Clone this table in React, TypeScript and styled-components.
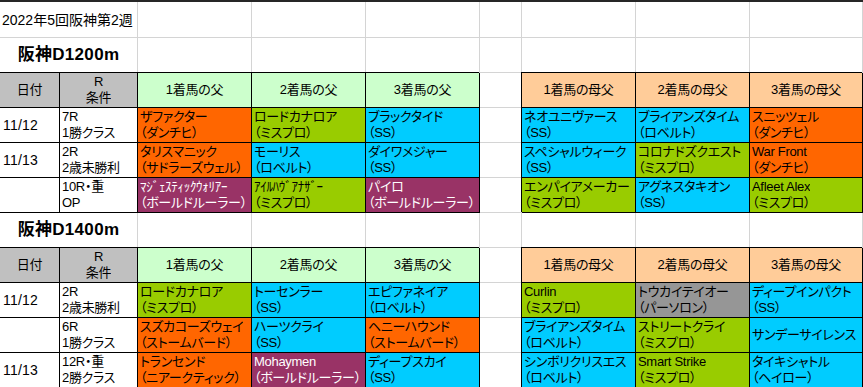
import styled, { createGlobalStyle, css } from "styled-components";

type Tone = "orange" | "green" | "cyan" | "purple" | "gray";

const TONE_COLORS: Record<Tone, string> = {
  orange: "#ff6600",
  green: "#99cc00",
  cyan: "#00ccff",
  purple: "#993366",
  gray: "#969696",
};

const GRID_LINE = "#d4d4d4";
const FONT = `"Liberation Sans", "Noto Sans CJK JP", sans-serif`;

type Horse = { name: string; line?: string; tone: Tone };
type Race = { date: string; race: string; cond: string; sires: Horse[]; dams: Horse[] };
type Block = { title: string; races: Race[] };

const BLOCKS: Block[] = [
  {
    title: "阪神D1200m",
    races: [
      {
        date: "11/12",
        race: "7R",
        cond: "1勝クラス",
        sires: [
          { name: "ザファクター", line: "（ダンチヒ）", tone: "orange" },
          { name: "ロードカナロア", line: "（ミスプロ）", tone: "green" },
          { name: "ブラックタイド", line: "（SS）", tone: "cyan" },
        ],
        dams: [
          { name: "ネオユニヴァース", line: "（SS）", tone: "cyan" },
          { name: "ブライアンズタイム", line: "（ロベルト）", tone: "cyan" },
          { name: "スニッツェル", line: "（ダンチヒ）", tone: "orange" },
        ],
      },
      {
        date: "11/13",
        race: "2R",
        cond: "2歳未勝利",
        sires: [
          { name: "タリスマニック", line: "（サドラーズウェル）", tone: "orange" },
          { name: "モーリス", line: "（ロベルト）", tone: "cyan" },
          { name: "ダイワメジャー", line: "（SS）", tone: "cyan" },
        ],
        dams: [
          { name: "スペシャルウィーク", line: "（SS）", tone: "cyan" },
          { name: "コロナドズクエスト", line: "（ミスプロ）", tone: "green" },
          { name: "War Front", line: "（ダンチヒ）", tone: "orange" },
        ],
      },
      {
        date: "",
        race: "10R・重",
        cond: "OP",
        sires: [
          { name: "ﾏｼﾞｪｽﾃｨｯｸｳｫﾘｱｰ", line: "（ボールドルーラー）", tone: "purple" },
          { name: "ｱｲﾙﾊｳﾞｱﾅｻﾞｰ", line: "（ミスプロ）", tone: "green" },
          { name: "パイロ", line: "（ボールドルーラー）", tone: "purple" },
        ],
        dams: [
          { name: "エンパイアメーカー", line: "（ミスプロ）", tone: "green" },
          { name: "アグネスタキオン", line: "（SS）", tone: "cyan" },
          { name: "Afleet Alex", line: "（ミスプロ）", tone: "green" },
        ],
      },
    ],
  },
  {
    title: "阪神D1400m",
    races: [
      {
        date: "11/12",
        race: "2R",
        cond: "2歳未勝利",
        sires: [
          { name: "ロードカナロア", line: "（ミスプロ）", tone: "green" },
          { name: "トーセンラー", line: "（SS）", tone: "cyan" },
          { name: "エピファネイア", line: "（ロベルト）", tone: "cyan" },
        ],
        dams: [
          { name: "Curlin", line: "（ミスプロ）", tone: "green" },
          { name: "トウカイテイオー", line: "（パーソロン）", tone: "gray" },
          { name: "ディープインパクト", line: "（SS）", tone: "cyan" },
        ],
      },
      {
        date: "",
        race: "6R",
        cond: "1勝クラス",
        sires: [
          { name: "スズカコーズウェイ", line: "（ストームバード）", tone: "orange" },
          { name: "ハーツクライ", line: "（SS）", tone: "cyan" },
          { name: "ヘニーハウンド", line: "（ストームバード）", tone: "orange" },
        ],
        dams: [
          { name: "ブライアンズタイム", line: "（ロベルト）", tone: "cyan" },
          { name: "ストリートクライ", line: "（ミスプロ）", tone: "green" },
          { name: "サンデーサイレンス", tone: "cyan" },
        ],
      },
      {
        date: "11/13",
        race: "12R・重",
        cond: "2勝クラス",
        sires: [
          { name: "トランセンド", line: "（ニアークティック）", tone: "orange" },
          { name: "Mohaymen", line: "（ボールドルーラー）", tone: "purple" },
          { name: "ディープスカイ", line: "（SS）", tone: "cyan" },
        ],
        dams: [
          { name: "シンボリクリスエス", line: "（ロベルト）", tone: "cyan" },
          { name: "Smart Strike", line: "（ミスプロ）", tone: "green" },
          { name: "タイキシャトル", line: "（ヘイロー）", tone: "cyan" },
        ],
      },
    ],
  },
];

export default function App() {
  return (
    <>
      <GlobalStyle />
      <TopBar />
      <Sheet>
        <Cell $span={2} $align="left">
          <SheetTitle>2022年5回阪神第2週</SheetTitle>
        </Cell>
        <BlankCells count={7} />
        {BLOCKS.map((block) => (
          <BlockRows key={block.title} block={block} />
        ))}
      </Sheet>
    </>
  );
}

function BlankCells(props: { count: number }) {
  return (
    <>
      {Array.from({ length: props.count }, (_, i) => (
        <Cell key={i} />
      ))}
    </>
  );
}

function BlockRows({ block }: { block: Block }) {
  return (
    <>
      <Cell $span={2}>
        <CourseTitle>{block.title}</CourseTitle>
      </Cell>
      <BlankCells count={7} />

      <Cell $boxed $bg="#c0c0c0">日付</Cell>
      <Cell $boxed $bg="#c0c0c0">
        <Lines>
          <Line>R</Line>
          <Line>条件</Line>
        </Lines>
      </Cell>
      {[1, 2, 3].map((n) => (
        <Cell key={`s${n}`} $boxed $bg="#ccffcc">
          {n}着馬の父
        </Cell>
      ))}
      <Cell />
      {[1, 2, 3].map((n) => (
        <Cell key={`d${n}`} $boxed $bg="#ffcc99">
          {n}着馬の母父
        </Cell>
      ))}

      {block.races.map((race) => (
        <RaceRow key={race.race} race={race} />
      ))}
    </>
  );
}

function RaceRow({ race }: { race: Race }) {
  return (
    <>
      <Cell $boxed $align="left">
        <DateText>{race.date}</DateText>
      </Cell>
      <Cell $boxed $align="left">
        <Lines>
          <Line>{race.race}</Line>
          <Line>{race.cond}</Line>
        </Lines>
      </Cell>
      {race.sires.map((h, i) => (
        <HorseCell key={`s${i}`} horse={h} />
      ))}
      <Cell />
      {race.dams.map((h, i) => (
        <HorseCell key={`d${i}`} horse={h} />
      ))}
    </>
  );
}

function HorseCell({ horse }: { horse: Horse }) {
  return (
    <Cell
      $boxed
      $align="left"
      $bg={TONE_COLORS[horse.tone]}
      $light={horse.tone === "purple"}
    >
      <Lines>
        <Line>{horse.name}</Line>
        {horse.line && <Line>{horse.line}</Line>}
      </Lines>
    </Cell>
  );
}

const GlobalStyle = createGlobalStyle`
  html, body {
    margin: 0;
    height: 387px;
    overflow: hidden;
    background: #ffffff;
  }
  body {
    font-family: ${FONT};
    color: #000000;
  }
`;

const TopBar = styled.div`
  height: 2px;
  background: #262626;
`;

const Sheet = styled.div`
  display: grid;
  grid-template-columns: 60px 78px 114px 114px 114px 42px 114px 114px 113px;
  grid-template-rows: 36px;
  grid-auto-rows: 35px;
  width: 863px;
`;

const Cell = styled.div<{
  $span?: number;
  $boxed?: boolean;
  $bg?: string;
  $align?: "left" | "center";
  $light?: boolean;
}>`
  box-sizing: border-box;
  grid-column: span ${(p) => p.$span ?? 1};
  display: flex;
  align-items: center;
  justify-content: ${(p) => (p.$align === "left" ? "flex-start" : "center")};
  padding-left: ${(p) => (p.$align === "left" ? "2px" : "0")};
  background: ${(p) => p.$bg ?? "#ffffff"};
  color: ${(p) => (p.$light ? "#ffffff" : "#000000")};
  border-right: 1px solid ${GRID_LINE};
  border-bottom: 1px solid ${GRID_LINE};
  font-size: 13px;
  line-height: 16px;
  letter-spacing: -0.3px;
  font-feature-settings: "palt";
  white-space: nowrap;
  overflow: hidden;
  ${(p) =>
    p.$boxed &&
    css`
      border-color: #000000;
      box-shadow: -1px -1px 0 #000000;
      overflow: visible;
    `}
  ${(p) =>
    p.$align !== "left" &&
    css`
      text-align: center;
    `}
`;

const Lines = styled.div`
  display: flex;
  flex-direction: column;
  min-width: 0;
  overflow: hidden;
`;

const Line = styled.span`
  display: block;
  height: 16px;
`;

const SheetTitle = styled.span`
  font-size: 14px;
  letter-spacing: 0;
  font-feature-settings: normal;
`;

const CourseTitle = styled.span`
  font-size: 17px;
  line-height: 20px;
  font-weight: 700;
  letter-spacing: 0.3px;
  font-feature-settings: normal;
`;

const DateText = styled.span`
  padding-left: 1px;
  font-size: 14px;
  letter-spacing: 0.2px;
`;
